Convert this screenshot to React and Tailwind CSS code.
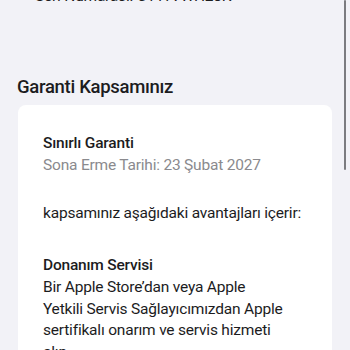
export default function App() {
  return (
    <div
      className="relative h-[350px] w-[350px] overflow-hidden bg-[#f2f2f7] text-[#1c1c1e]"
      style={{ fontFamily: "Roboto, 'Liberation Sans', sans-serif" }}
    >
      <div className="-mt-[13px] pl-[35px] text-[15.5px] leading-[18px] tracking-[-0.2px] text-[#1c1c1e]">
        Seri Numarası: C11?VWH28K
      </div>

      <h2 className="mt-[71px] pl-[17px] text-[18.5px] font-medium leading-[22px] tracking-[-0.3px]">
        Garanti Kapsamınız
      </h2>

      <div className="mx-[18px] mt-[7px] rounded-[8px] bg-white px-[25px] pt-[28px] pb-6 text-[15.5px] leading-[21.5px] tracking-[-0.2px]">
        <div className="font-medium">Sınırlı Garanti</div>
        <div className="text-[#8a8a8e]">Sona Erme Tarihi: 23 Şubat 2027</div>

        <p className="mt-[27px]">kapsamınız aşağıdaki avantajları içerir:</p>

        <div className="mt-[30px] font-medium">Donanım Servisi</div>
        <p className="mt-[1px]">
          Bir Apple Store’dan veya Apple
          <br />
          Yetkili Servis Sağlayıcımızdan Apple
          <br />
          sertifikalı onarım ve servis hizmeti
          <br />
          alın.
        </p>
      </div>

      <div className="absolute right-[4px] top-0 h-[170px] w-[2px] rounded-full bg-[#7c7c80]" />
    </div>
  );
}
